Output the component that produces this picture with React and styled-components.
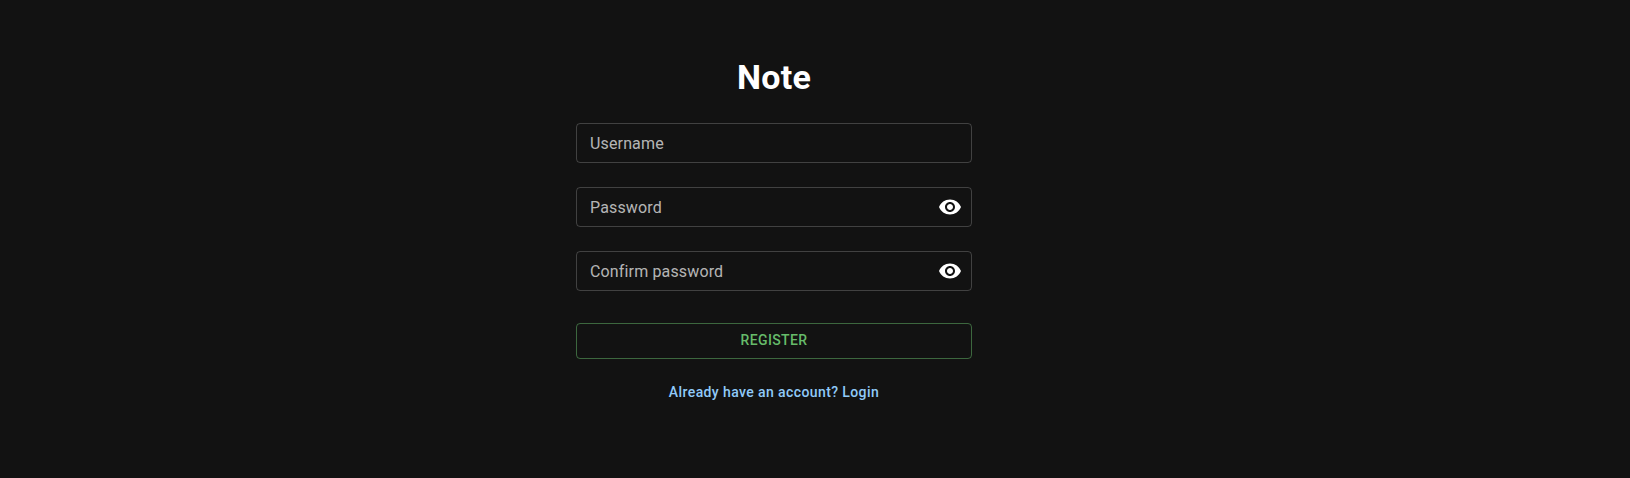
import React from "react";
import styled, { createGlobalStyle } from "styled-components";

const Global = createGlobalStyle`
  html, body { margin: 0; padding: 0; background: #121212; }
  body { font-family: Roboto, "Liberation Sans", sans-serif; height: 478px; overflow: hidden; }
`;

const Page = styled.main`
  display: flex;
  justify-content: flex-start;
  padding-left: 576px;
  height: 478px;
  box-sizing: border-box;
  background: #121212;
`;

const Form = styled.form`
  width: 396px;
  display: flex;
  flex-direction: column;
  padding-top: 56px;
`;

const Title = styled.h1`
  margin: 0 0 25px;
  height: 42px;
  font-size: 34px;
  line-height: 42px;
  font-weight: 700;
  letter-spacing: 0.25px;
  color: #fff;
  text-align: center;
`;

const Field = styled.div`
  height: 40px;
  box-sizing: border-box;
  display: flex;
  align-items: center;
  margin-bottom: 24px;
  padding: 0 9px 0 13px;
  border: 1px solid rgba(255, 255, 255, 0.2);
  border-radius: 4px;
`;

const Input = styled.input`
  flex: 1;
  min-width: 0;
  border: 0;
  padding: 2px 0 0;
  outline: 0;
  background: transparent;
  color: #fff;
  font: 400 16px/24px Roboto, sans-serif;
  letter-spacing: 0.15px;
  &::placeholder { color: rgba(255, 255, 255, 0.7); opacity: 1; }
`;

const Toggle = styled.button`
  display: flex;
  padding: 0;
  border: 0;
  background: none;
  color: #fff;
  cursor: pointer;
`;

const Submit = styled.button`
  height: 36px;
  margin-top: 8px;
  padding: 0 0 2px;
  box-sizing: border-box;
  border: 1px solid rgba(102, 187, 106, 0.5);
  border-radius: 4px;
  background: transparent;
  color: #66bb6a;
  font: 500 14px/24px Roboto, sans-serif;
  letter-spacing: 0.4px;
  text-transform: uppercase;
  cursor: pointer;
`;

const LoginLink = styled.a`
  margin-top: 23px;
  text-align: center;
  color: #90caf9;
  font: 500 14px/20px Roboto, sans-serif;
  letter-spacing: 0.4px;
  text-decoration: none;
`;

const Eye = () => (
  <svg width="24" height="24" viewBox="0 0 24 24" fill="currentColor" aria-hidden="true">
    <path d="M12 4.5C7 4.5 2.73 7.61 1 12c1.73 4.39 6 7.5 11 7.5s9.27-3.11 11-7.5c-1.73-4.39-6-7.5-11-7.5zM12 17c-2.76 0-5-2.24-5-5s2.24-5 5-5 5 2.24 5 5-2.24 5-5 5zm0-8c-1.66 0-3 1.34-3 3s1.34 3 3 3 3-1.34 3-3-1.34-3-3-3z" />
  </svg>
);

const PasswordField = ({ placeholder }) => (
  <Field>
    <Input type="password" placeholder={placeholder} />
    <Toggle type="button" aria-label="Show password"><Eye /></Toggle>
  </Field>
);

export default function App() {
  return (
    <>
      <Global />
      <Page>
        <Form onSubmit={(e) => e.preventDefault()}>
          <Title>Note</Title>
          <Field><Input type="text" placeholder="Username" /></Field>
          <PasswordField placeholder="Password" />
          <PasswordField placeholder="Confirm password" />
          <Submit type="submit">Register</Submit>
          <LoginLink href="#">Already have an account? Login</LoginLink>
        </Form>
      </Page>
    </>
  );
}
